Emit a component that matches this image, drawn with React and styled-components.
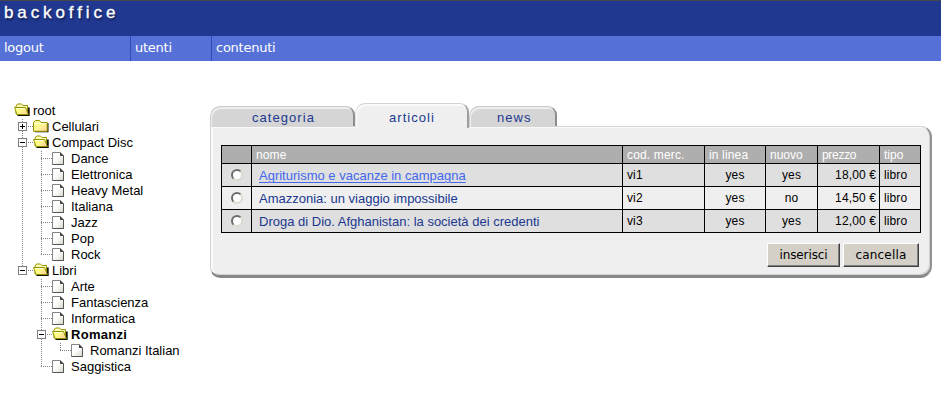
import React from "react";
import styled, { createGlobalStyle, css } from "styled-components";

const GlobalStyle = createGlobalStyle`
  * { box-sizing: border-box; }
  body { margin: 0; background: #fff; font: 13px/16px "Liberation Sans", Arial, sans-serif; color: #000; }
`;

const Page = styled.div`
  width: 941px;
  height: 401px;
  overflow: hidden;
`;
const Banner = styled.header`
  height: 36px;
  border-top: 1px solid #44464c;
  background: #203890;
  padding: 2px 0 0 4px;
  color: #fff;
  font-size: 17px;
  line-height: 20px;
  letter-spacing: 3.9px;
  -webkit-text-stroke: 0.35px #fff;
  text-shadow: 1px 2px 2px #101c48;
`;
const Nav = styled.nav`
  display: flex;
  height: 25px;
  background: #5571d7;
`;
const NavItem = styled.a`
  width: ${(p) => p.$w}px;
  padding: 3px 0 0 4px;
  border-right: ${(p) => (p.$last ? "0" : "1px solid #2f4cbc")};
  color: #fff;
  font: 13px/17px "DejaVu Sans", Verdana, sans-serif;
  letter-spacing: -0.25px;
`;
const Body = styled.main`
  display: flex;
  align-items: flex-start;
`;
const Tree = styled.aside`
  width: 210px;
  padding: 42px 0 0 14px;
`;
const TreeRow = styled.div`
  display: flex;
  height: 16px;
  white-space: nowrap;
  svg { display: block; flex: none; }
`;
const TreeLabel = styled.span`
  font-weight: ${(p) => (p.$bold ? 700 : 400)};
  letter-spacing: ${(p) => (p.$bold ? 0.3 : 0)}px;
`;

const Content = styled.section`
  width: 722px;
  padding-top: 41px;
`;
const Tabs = styled.div`
  display: flex;
  align-items: flex-end;
  height: 24px;
`;
const Tab = styled.div`
  width: ${(p) => p.$w}px;
  height: 20px;
  padding: 3px 0 0 ${(p) => p.$pad}px;
  border-radius: 10px 9px 0 0;
  background: #d5d5d5;
  border: solid;
  border-width: 1px 2px 0 1px;
  border-color: #c9c9c9 #8d8d8d #c9c9c9 #cfcfcf;
  box-shadow: inset 1px 2px 1px #efefef;
  color: #203890;
  letter-spacing: 1.05px;
  ${(p) =>
    p.$active &&
    css`
      height: 25px;
      margin-bottom: -2px;
      padding-top: 6px;
      position: relative;
      background: #efefef;
      border-color: #d3d3d3 #a0a0a0 #d3d3d3 #e2e2e2;
      box-shadow: inset 1px 2px 1px #fafafa;
    `}
`;
const Panel = styled.div`
  height: 152px;
  padding: 18px 11px 0 10px;
  background: #efefef;
  border: solid;
  border-width: 1px 2px 3px 1px;
  border-color: #d5d5d5 #929292 #888 #d5d5d5;
  border-radius: 0 11px 12px 10px;
  box-shadow: inset 2px 1px 1px #fafafa, inset -1px -1px 1px #cfcfcf;
`;
const Table = styled.div`
  display: grid;
  grid-template-columns: 29px 370px 81px 60px 51px 61px 40px;
  grid-template-rows: 17px 22px 22px 22px;
  gap: 1px;
  width: 700px;
  padding: 1px;
  background: #000;
  font-size: 12px;
`;
const Cell = styled.div`
  padding: ${(p) => p.$pad || "3px 4px 0"};
  background: ${(p) => p.$bg};
  text-align: ${(p) => p.$align || "left"};
  letter-spacing: 0.12px;
  white-space: nowrap;
`;
const HeadCell = styled(Cell)`
  padding: 1px 0 0 4px;
  background: #aeaeae;
  color: #fff;
  letter-spacing: ${(p) => p.$ls || 0}px;
`;
const Title = styled.a`
  color: ${(p) => (p.$hover ? "#4267ed" : "#203890")};
  font-size: 13px;
  text-decoration: ${(p) => (p.$hover ? "underline" : "none")};
  text-underline-offset: 2px;
  text-decoration-thickness: 1px;
  letter-spacing: 0;
`;
const Radio = styled.input`
  appearance: none;
  display: block;
  width: 12px;
  height: 12px;
  margin: 0;
  border-radius: 50%;
  border: 2px solid;
  border-color: #6c6c6c #dedad0 #dedad0 #6c6c6c;
  background: #fff;
`;
const Actions = styled.div`
  display: flex;
  justify-content: flex-end;
  gap: 3px;
  margin-top: 10px;
`;
const Button = styled.button`
  width: ${(p) => p.$w}px;
  height: 24px;
  padding: 0;
  border: 1px solid;
  border-color: #fff #404040 #404040 #fff;
  box-shadow: inset -1px -1px #808080;
  background: #d4d0c8;
  color: #000;
  font: 12px/20px "DejaVu Sans", Verdana, sans-serif;
  letter-spacing: ${(p) => p.$ls}px;
`;

/* One 19x16 indentation cell of the tree: a dotted guide with an optional branch and box. */
const Guide = ({ kind }) => (
  <svg width="19" height="16" shapeRendering="crispEdges" fill="none">
    <g stroke="#808080" strokeDasharray="1 1">
      {kind !== "blank" && <path d={kind === "end" || kind === "minusEnd" ? "M8.5 0V8" : "M8.5 0V16"} />}
      {kind !== "blank" && kind !== "line" && <path d="M8 7.5H19" />}
    </g>
    {/plus|minus/.test(kind) && (
      <>
        <rect x="4.5" y="3.5" width="8" height="8" fill="#fff" stroke="#808080" />
        <path d="M6 7.5H11" stroke="#000" />
        {kind === "plus" && <path d="M8.5 5V10" stroke="#000" />}
      </>
    )}
  </svg>
);
const icons = {
  open: (
    <>
      <path d="M14 4.5h1.7V13H4L3 12h11z" fill="#111100" />
      <path d="M2 11V3L3.5 1H7.5L9 2.5H13.5V11z" fill="#ffffb4" stroke="#929200" />
      <path d="M.6 4.5H11.5L14.3 11.5H3z" fill="url(#folder-open)" stroke="#929200" />
      <path d="M1.8 5.5H10.8" stroke="#ffffdc" />
    </>
  ),
  closed: (
    <>
      <path d="M14 4h1.5v9.3H2V12h12z" fill="#111100" />
      <path d="M.5 12.3V3.5L2.5 1.5H6.5L8 3.5H14.2V12.3z" fill="url(#folder-closed)" stroke="#929200" />
      <path d="M1.5 4.5H13.5" stroke="#ffffdc" />
    </>
  ),
  doc: (
    <>
      <path d="M.5 1.5H8L11.5 5V13.5H.5z" fill="url(#sheet)" stroke="#858585" />
      <path d="M11.5 5V13.5H.5" stroke="#555" />
      <path d="M8 1L12 5H8z" fill="#444" />
    </>
  ),
};
const Icon = ({ name }) => (
  <svg width="19" height="16" fill="none">
    {icons[name]}
  </svg>
);
const Gradients = () => (
  <defs>
    <linearGradient id="folder-open" gradientUnits="userSpaceOnUse" x1="3" y1="4" x2="13" y2="13">
      <stop offset="0.3" stopColor="#ffff84" />
      <stop offset="1" stopColor="#ffc7a0" />
    </linearGradient>
    <linearGradient id="folder-closed" x1="0" y1="0" x2="1" y2="1">
      <stop offset="0.4" stopColor="#ffff90" />
      <stop offset="1" stopColor="#ffcda0" />
    </linearGradient>
    <linearGradient id="sheet" x1="0" y1="0" x2="1" y2="1">
      <stop offset="0.45" stopColor="#fff" />
      <stop offset="1" stopColor="#d5d5c6" />
    </linearGradient>
  </defs>
);
const Sprite = styled.svg`
  position: absolute;
  width: 0;
  height: 0;
`;

const nodes = [
  [[], "open", "root"],
  [["plus"], "closed", "Cellulari"],
  [["minus"], "open", "Compact Disc"],
  [["line", "tee"], "doc", "Dance"],
  [["line", "tee"], "doc", "Elettronica"],
  [["line", "tee"], "doc", "Heavy Metal"],
  [["line", "tee"], "doc", "Italiana"],
  [["line", "tee"], "doc", "Jazz"],
  [["line", "tee"], "doc", "Pop"],
  [["line", "end"], "doc", "Rock"],
  [["minusEnd"], "open", "Libri"],
  [["blank", "tee"], "doc", "Arte"],
  [["blank", "tee"], "doc", "Fantascienza"],
  [["blank", "tee"], "doc", "Informatica"],
  [["blank", "minus"], "open", "Romanzi", true],
  [["blank", "line", "end"], "doc", "Romanzi Italian"],
  [["blank", "end"], "doc", "Saggistica"],
];
const heads = [
  [""],
  ["nome", 0.1],
  ["cod. merc.", 0.15],
  ["in linea", 0.15],
  ["nuovo", 0],
  ["prezzo", -0.3],
  ["tipo", 0],
];
const articles = [
  ["Agriturismo e vacanze in campagna", "vi1", "yes", "yes", "18,00 €"],
  ["Amazzonia: un viaggio impossibile", "vi2", "yes", "no", "14,50 €"],
  ["Droga di Dio. Afghanistan: la società dei credenti", "vi3", "yes", "yes", "12,00 €"],
];

export default function App() {
  return (
    <Page>
      <GlobalStyle />
      <Sprite><Gradients /></Sprite>
      <Banner>backoffice</Banner>
      <Nav>
        <NavItem $w={131}>logout</NavItem>
        <NavItem $w={81}>utenti</NavItem>
        <NavItem $w={120} $last>contenuti</NavItem>
      </Nav>
      <Body>
        <Tree>
          {nodes.map(([guides, icon, label, bold]) => (
            <TreeRow key={label}>
              {guides.map((g, i) => <Guide key={i} kind={g} />)}
              <Icon name={icon} />
              <TreeLabel $bold={bold}>{label}</TreeLabel>
            </TreeRow>
          ))}
        </Tree>
        <Content>
          <Tabs>
            <Tab $w={145} $pad={41}>categoria</Tab>
            <Tab $w={114} $pad={33} $active>articoli</Tab>
            <Tab $w={88} $pad={27}>news</Tab>
          </Tabs>
          <Panel>
            <Table>
              {heads.map(([text, ls], i) => <HeadCell key={i} $ls={ls}>{text}</HeadCell>)}
              {articles.map(([title, code, online, fresh, price], i) => {
                const bg = i % 2 ? "#efefef" : "#dfdfdf";
                return (
                  <React.Fragment key={code}>
                    <Cell $bg={bg} $pad="5px 0 0 9px"><Radio type="radio" name="article" /></Cell>
                    <Cell $bg={bg} $pad="4px 0 0 7px"><Title $hover={i === 0}>{title}</Title></Cell>
                    <Cell $bg={bg}>{code}</Cell>
                    <Cell $bg={bg} $align="center">{online}</Cell>
                    <Cell $bg={bg} $align="center">{fresh}</Cell>
                    <Cell $bg={bg} $align="right" $pad="3px 3px 0 0">{price}</Cell>
                    <Cell $bg={bg}>libro</Cell>
                  </React.Fragment>
                );
              })}
            </Table>
            <Actions>
              <Button $w={73} $ls={-0.1}>inserisci</Button>
              <Button $w={76} $ls={0.2}>cancella</Button>
            </Actions>
          </Panel>
        </Content>
      </Body>
    </Page>
  );
}
